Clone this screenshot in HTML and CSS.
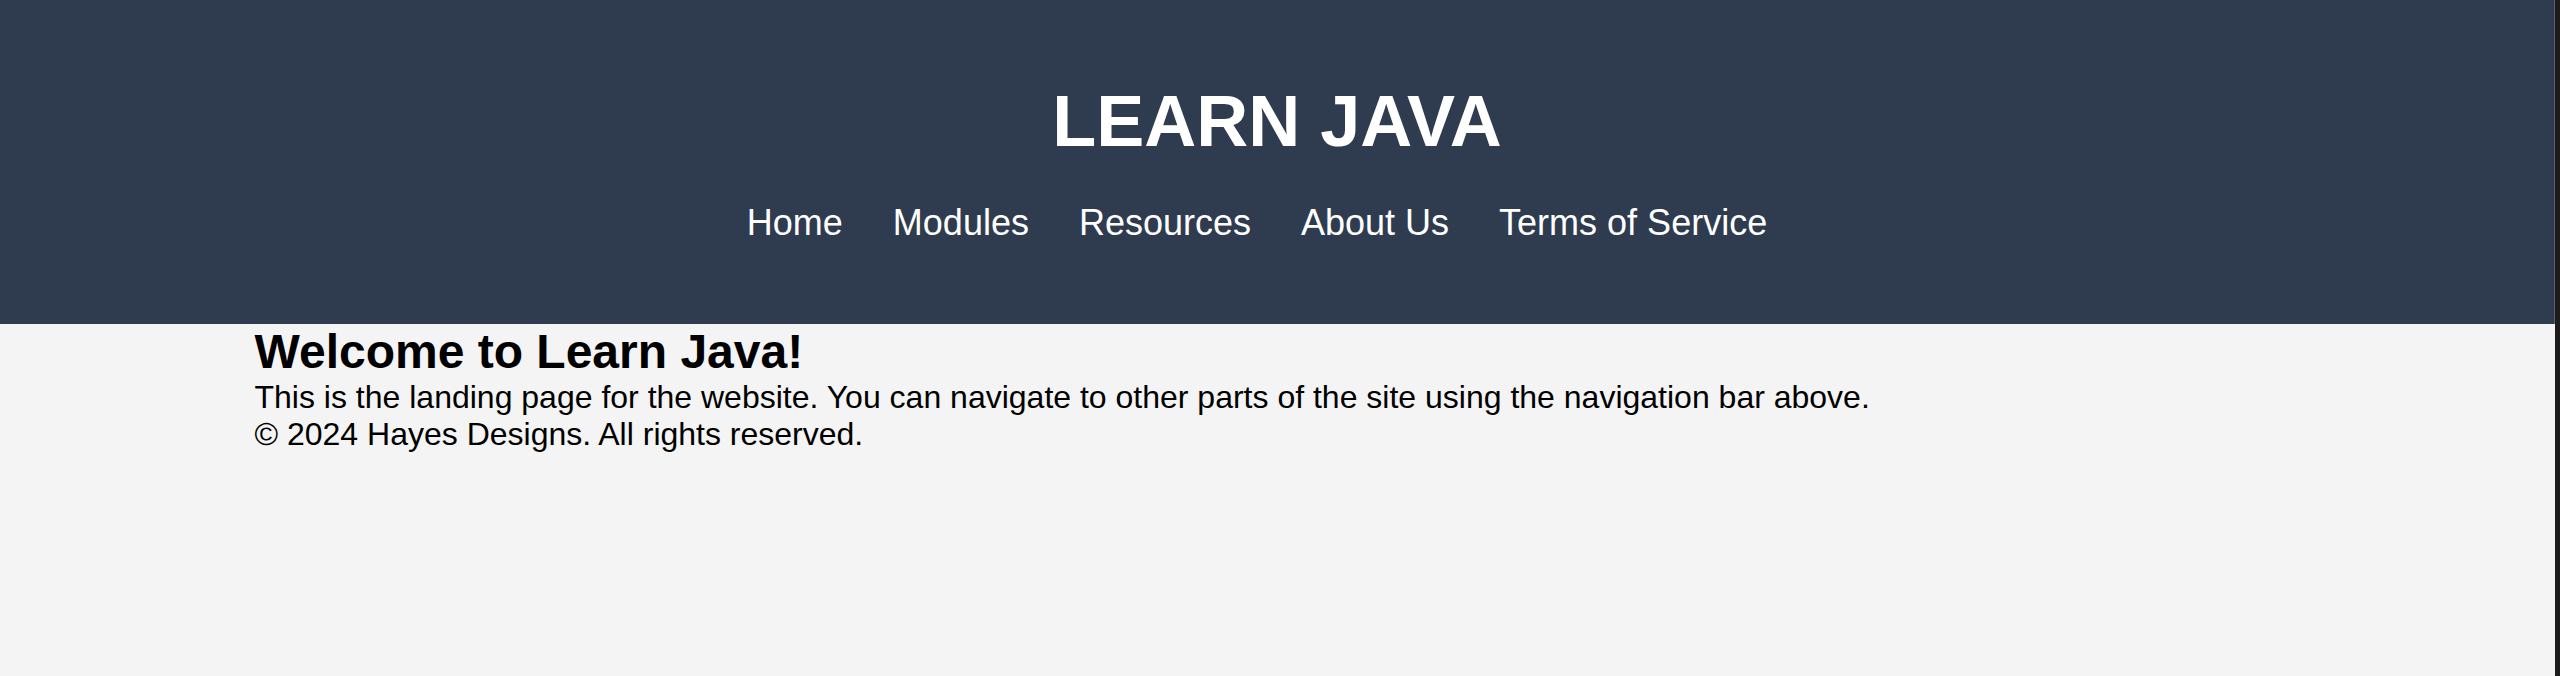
FILE: index.html
```html
<!DOCTYPE html>
<html lang="en">
<head>
<meta charset="utf-8">
<title>Learn Java</title>
<link rel="stylesheet" href="styles.css">
</head>
<body>
<div class="page">
  <header class="site-header">
    <h1 class="site-title">LEARN JAVA</h1>
    <nav>
      <ul class="nav-list">
        <li><a href="#">Home</a></li>
        <li><a href="#">Modules</a></li>
        <li><a href="#">Resources</a></li>
        <li><a href="#">About Us</a></li>
        <li><a href="#">Terms of Service</a></li>
      </ul>
    </nav>
  </header>
  <main class="content">
    <h2 class="welcome">Welcome to Learn Java!</h2>
    <p class="lead">This is the landing page for the website. You can navigate to other parts of the site using the navigation bar above.</p>
    <footer class="footer">&copy; 2024 Hayes Designs. All rights reserved.</footer>
  </main>
</div>
</body>
</html>
```
FILE: styles.css
```css
html {
  background: #1c1c1d;
  height: 100%;
}
body {
  margin: 0;
  height: 100%;
  font-family: "Liberation Sans", Arial, Helvetica, sans-serif;
  font-size: 32px;
  color: #000;
}
.page {
  width: calc(100% - 5px);
  min-height: 100%;
  background: #f4f4f4;
}
.site-header {
  background: #2f3c4f;
  border-right: 1px solid #596272;
  padding: 80px 0 81px;
  text-align: center;
}
.site-title {
  margin: 0;
  font-size: 72px;
  line-height: 83px;
  font-weight: bold;
  color: #fff;
}
.nav-list {
  list-style: none;
  margin: 39px 0 0;
  padding: 0 40px 0 0;
  display: flex;
  justify-content: center;
  gap: 50px;
  font-size: 36px;
  line-height: 41px;
}
.nav-list a {
  color: #fff;
  text-decoration: none;
}
.content {
  width: 80%;
  margin: 0 auto;
  padding-right: 3px;
  box-sizing: border-box;
}
.welcome {
  margin: 0 0 0 -1px;
  font-size: 48px;
  font-weight: bold;
}
.lead {
  margin: 0 0 0 -1px;
}
.footer {
  margin: 0 0 0 -1px;
}
```
